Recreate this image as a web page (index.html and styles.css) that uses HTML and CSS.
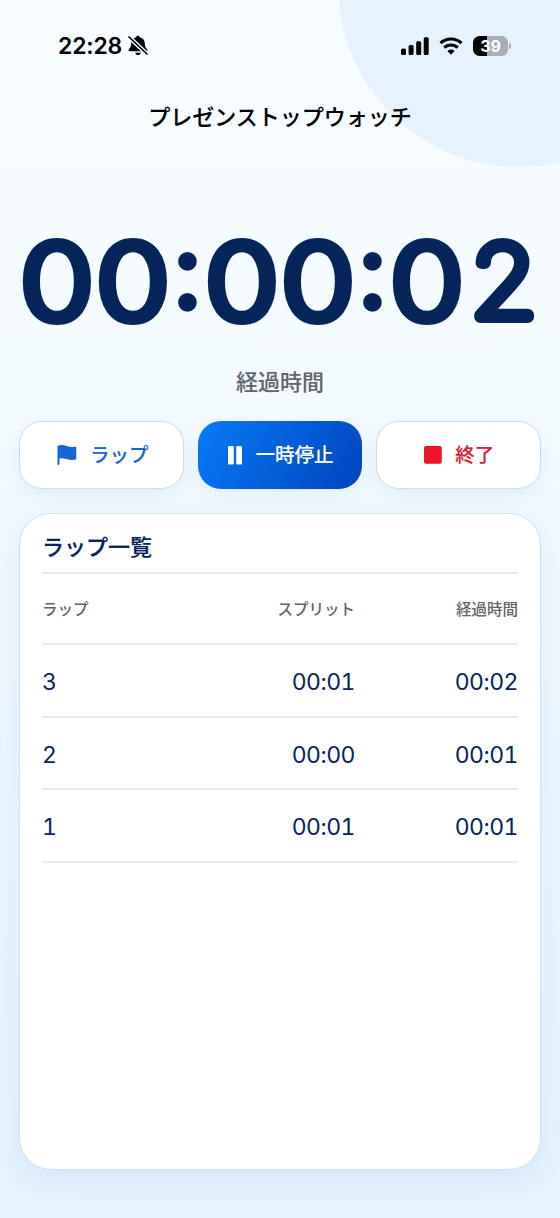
FILE: index.html
```html
<!DOCTYPE html>
<html lang="ja">
<head>
<meta charset="utf-8">
<title>プレゼンストップウォッチ</title>
<link rel="stylesheet" href="styles.css">
</head>
<body>
<div class="screen">
  <div class="orb"></div>
  <header class="status">
    <div class="status-left">
      <span class="clock">22:28</span>
      <svg class="bell" width="20" height="21" viewBox="0 0 20 21">
        <path d="M10 .7c-1 0-1.800.6-2 1.500C4.900 3 3.300 5.500 3.200 8.400c-.1 2.700-.8 4.200-2.100 5.500-1 .9-.7 2.400.7 2.400h16.400c1.400 0 1.700-1.500.7-2.400-1.300-1.300-2-2.800-2.100-5.500-.1-2.900-1.700-5.400-4.800-6.200C11.800 1.300 11 .7 10 .7zM7.200 17.700h5.600c-.3 1.500-1.400 2.400-2.800 2.400s-2.500-.9-2.800-2.400z"/>
        <path class="bell-gap" d="M1 2l18 17"/>
        <path class="bell-slash" d="M1 2l18 17"/>
      </svg>
    </div>
    <div class="status-right">
      <svg width="28" height="18" viewBox="0 0 28 18">
        <rect x="0" y="11.500" width="5" height="6.500" rx="1.500"/>
        <rect x="7.600" y="8" width="5" height="10" rx="1.500"/>
        <rect x="15.200" y="4.300" width="5" height="13.700" rx="1.500"/>
        <rect x="22.700" y="0.300" width="5" height="17.700" rx="1.500"/>
      </svg>
      <svg class="wifi" width="24" height="18" viewBox="0 0 24 18">
        <path class="arc" d="M1.500 6.200a15.200 15.200 0 0 1 21 0M5.300 10.700a9.700 9.700 0 0 1 13.400 0"/>
        <path d="M12 17.700l-3.600-3.700a5.200 5.200 0 0 1 7.200 0z"/>
      </svg>
      <div class="battery"><span class="level">39</span><i class="nub"></i></div>
    </div>
  </header>
  <h1 class="title">プレゼンストップウォッチ</h1>
  <svg class="timer" width="560" height="146" viewBox="0 0 560 146">
    <text transform="translate(57 110) scale(1.17 1)">0</text>
    <text transform="translate(133 110) scale(1.17 1)">0</text>
    <text class="colon" x="187.500" y="96.500">:</text>
    <text transform="translate(242 110) scale(1.17 1)">0</text>
    <text transform="translate(318 110) scale(1.17 1)">0</text>
    <text class="colon" x="372.500" y="96.500">:</text>
    <text transform="translate(427 110) scale(1.17 1)">0</text>
    <text class="two" transform="translate(504 107.500) scale(1.08 1)">2</text>
  </svg>
  <p class="caption">経過時間</p>
  <div class="actions">
    <button class="btn lap">
      <svg width="20" height="22" viewBox="0 0 20 22"><path d="M.5 2C3 .6 6 .8 9.500 2c3.500 1.200 6.500 1.300 9.800.4V15.300c-3.300 1-6.300.8-9.800-.3-2.700-.8-4.900-1-7-.5v5.600a1 1 0 0 1-2 0z"/></svg>
      <span>ラップ</span>
    </button>
    <button class="btn pause">
      <svg width="14" height="19" viewBox="0 0 14 19"><rect x="0" y="0" width="5.800" height="18.500" rx="1.300"/><rect x="8.200" y="0" width="5.800" height="18.500" rx="1.300"/></svg>
      <span>一時停止</span>
    </button>
    <button class="btn stop">
      <svg width="18" height="18" viewBox="0 0 18 18"><rect width="17.800" height="17.800" rx="2"/></svg>
      <span>終了</span>
    </button>
  </div>
  <section class="card">
    <h2>ラップ一覧</h2>
    <div class="row head"><span>ラップ</span><span>スプリット</span><span>経過時間</span></div>
    <div class="row"><span>3</span><span>00:01</span><span>00:02</span></div>
    <div class="row"><span>2</span><span>00:00</span><span>00:01</span></div>
    <div class="row"><span>1</span><span>00:01</span><span>00:01</span></div>
  </section>
</div>
</body>
</html>
```
FILE: styles.css
```css
* { box-sizing: border-box; margin: 0; padding: 0; }
body { font-family: Inter, "Noto Sans CJK JP", sans-serif; }
.screen {
  position: relative;
  width: 560px;
  height: 1218px;
  overflow: hidden;
  display: flex;
  flex-direction: column;
  background: linear-gradient(180deg, #f6fcff 0%, #f4fbff 30%, #e5f3ff 100%);
}
.screen > * { position: relative; flex-shrink: 0; }
.screen > .orb {
  position: absolute;
  left: 338px;
  top: -197px;
  width: 364px;
  height: 364px;
  border-radius: 50%;
  background: #e6f2fd;
}
.status {
  height: 90px;
  padding: 1px 49px 0 58px;
  display: flex;
  justify-content: space-between;
  align-items: center;
}
.status-left, .status-right { display: flex; align-items: center; }
.status-left { gap: 6px; }
.status-right { gap: 10px; }
.clock { font-size: 23px; font-weight: 600; letter-spacing: -0.2px; line-height: 30px; }
.bell-gap { stroke: #f6fcff; stroke-width: 4.200; }
.bell-slash { stroke: #000; stroke-width: 1.700; stroke-linecap: round; }
.arc { fill: none; stroke: #000; stroke-width: 3.200; }
.battery {
  position: relative;
  width: 35px;
  height: 20px;
  margin-right: 3px;
  border-radius: 6.500px;
  background: linear-gradient(90deg, #000 40%, #a7afb6 40%);
  color: #fff;
  font-size: 16px;
  font-weight: 700;
  line-height: 20px;
  text-align: center;
}
.nub {
  position: absolute;
  right: -3px;
  top: 7px;
  width: 2px;
  height: 6px;
  border-radius: 0 2px 2px 0;
  background: #a7afb6;
}
.title {
  height: 54px;
  font-size: 22px;
  font-weight: 500;
  line-height: 54px;
  text-align: center;
  -webkit-text-stroke: 0.1px #000;
}
.timer { display: block; margin-top: 65px; overflow: visible; }
.timer text {
  font-family: Inter, sans-serif;
  font-size: 103px;
  font-weight: 200;
  text-anchor: middle;
  fill: #05245a;
  stroke: #05245a;
  stroke-width: 10px;
  stroke-linejoin: round;
}
.timer .colon { font-size: 92px; stroke-width: 11.500px; }
.timer .two { font-size: 99px; stroke-width: 12px; font-weight: 100; }
.caption {
  height: 54px;
  font-size: 22px;
  font-weight: 500;
  line-height: 54px;
  text-align: center;
  color: #60656b;
  -webkit-text-stroke: 0.1px #60656b;
}
.actions {
  margin: 12px 19px 0;
  display: grid;
  grid-template-columns: repeat(3, 1fr);
  gap: 13px;
}
.btn {
  height: 68px;
  display: flex;
  align-items: center;
  justify-content: center;
  gap: 13px;
  padding-left: 2px;
  border: 1.500px solid #c9dcf3;
  border-radius: 23px;
  background: #fff;
  box-shadow: 0 6px 18px rgba(30, 90, 170, 0.08);
  font: 500 19.500px/28px Inter, "Noto Sans CJK JP", sans-serif;
  -webkit-text-stroke: 0.1px currentColor;
}
.btn svg { fill: currentColor; }
.lap { color: #1764d8; }
.pause { margin: 0 0.500px; color: #fff; border: 0; background: linear-gradient(120deg, #087af6, #0044bd); }
.stop { color: #d91a32; }
.stop svg { fill: #ec142b; }
.card {
  height: 657px;
  margin: 24px 19px 0;
  padding: 0 22px;
  border: 1px solid #cfe2f5;
  border-radius: 32px;
  background: #fff;
  box-shadow: 0 8px 28px rgba(30, 90, 160, 0.09);
  color: #05245a;
}
.card h2 {
  height: 60px;
  padding-top: 8px;
  border-bottom: 2px solid #e9eaeb;
  font-size: 22px;
  font-weight: 500;
  line-height: 50px;
  -webkit-text-stroke: 0.2px #05245a;
}
.row {
  height: 72.500px;
  display: grid;
  grid-template-columns: 150px 163px 1fr;
  align-items: center;
  padding-top: 3.500px;
  border-bottom: 2px solid #e9eaeb;
  font-size: 23px;
  letter-spacing: -0.5px;
  font-variant-numeric: tabular-nums;
}
.row span + span { text-align: right; }
.row.head { height: 71px; padding-top: 0; padding-bottom: 2px; font-size: 15.500px; font-weight: 500; letter-spacing: 0; color: #606468; }
```
